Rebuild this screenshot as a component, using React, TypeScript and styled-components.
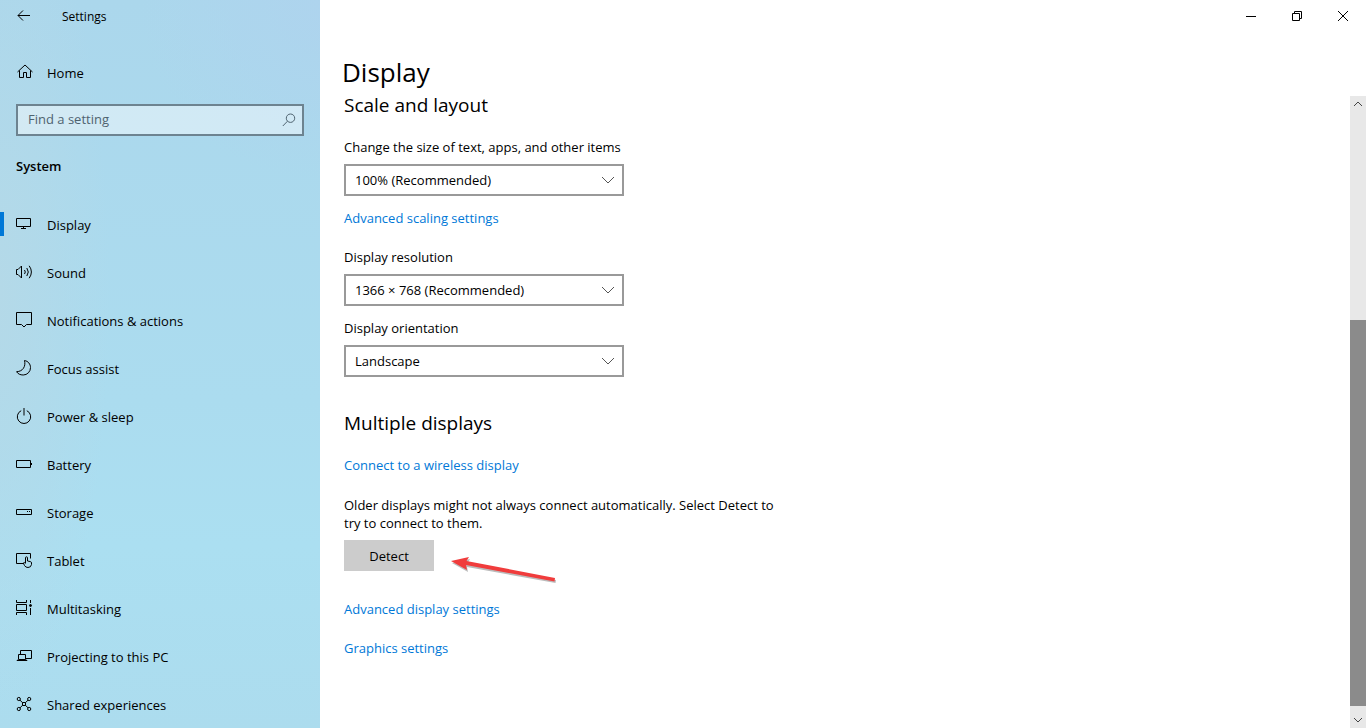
import React from "react";
import styled, { createGlobalStyle } from "styled-components";

const GlobalStyle = createGlobalStyle`
  *, *::before, *::after { box-sizing: border-box; }
  body {
    margin: 0;
    background: #fff;
    color: #000;
    font-family: "Open Sans", "Noto Sans", sans-serif;
    font-size: 13px;
    line-height: 20px;
  }
  button, input, select { font: inherit; color: inherit; }
  h1, h2, p, ul { margin: 0; padding: 0; }
`;

const Shell = styled.div`
  display: grid;
  grid-template-columns: 320px minmax(0, 1fr);
  min-height: 100vh;
`;

const Sidebar = styled.aside`
  display: flex;
  flex-direction: column;
  background:
    radial-gradient(circle at 100% 0, #aed4ee 0, rgba(174, 212, 238, 0) 180px),
    radial-gradient(ellipse 110px 420px at 0 40%, #b4d9e8 0, rgba(180, 217, 232, 0) 100%),
    linear-gradient(180deg, #abd7ec 0, #abdcef 55%, #abdff1 75%, #acdcee 100%);
`;

const TitleRow = styled.header`
  display: flex;
  align-items: center;
  height: 32px;
  font-size: 12px;
`;

const BackButton = styled.button`
  display: grid;
  place-items: center;
  width: 48px;
  height: 32px;
  padding: 0;
  border: 0;
  background: none;
`;

const AppName = styled.span`
  padding: 2px 0 0 14px;
`;

const SideLink = styled.a<{ $active?: boolean }>`
  display: flex;
  align-items: center;
  height: 48px;
  padding-left: ${(p) => (p.$active ? 12 : 16)}px;
  color: #000;
  text-decoration: none;

  &::before {
    content: "";
    display: ${(p) => (p.$active ? "block" : "none")};
    width: 4px;
    height: 24px;
    margin: 0 0 0 -12px;
    background: #0078d7;
  }

  & > svg { margin-left: ${(p) => (p.$active ? 12 : 0)}px; }
`;

const SideLabel = styled.span`
  padding: 2px 0 0 13px;
`;

const HomeArea = styled.div`
  padding-top: 16px;
`;

const SearchBox = styled.label`
  display: flex;
  align-items: center;
  height: 32px;
  margin: 8px 16px 0;
  padding: 0 6px 0 10px;
  border: 2px solid #6d8390;
  background: rgba(255, 255, 255, 0.45);
  color: #4f6370;
`;

const SearchInput = styled.input`
  flex: 1;
  min-width: 0;
  padding: 0 0 2px;
  border: 0;
  outline: 0;
  background: none;

  &::placeholder { color: #4f6370; opacity: 1; }
`;

const GroupTitle = styled.h2`
  padding: 20px 16px 24px;
  font-size: 13px;
  font-weight: 600;
  line-height: 20px;
`;

const NavList = styled.ul`
  list-style: none;
`;

const Main = styled.main`
  display: flex;
  flex-direction: column;
`;

const WindowButtons = styled.div`
  display: flex;
  justify-content: flex-end;
`;

const WindowButton = styled.button`
  display: grid;
  place-items: center;
  width: 46px;
  height: 32px;
  padding: 0;
  border: 0;
  background: none;
`;

const PageTitle = styled.h1`
  padding: 20px 22px 4px;
  font-size: 26px;
  font-weight: 400;
  line-height: 40px;
`;

const ScrollArea = styled.div`
  display: flex;
  flex: 1;
`;

const Content = styled.div`
  flex: 1;
  padding-left: 24px;
`;

const Section = styled.section`
  display: flex;
  flex-direction: column;
  align-items: flex-start;
  max-width: 448px;

  & + & { margin-top: 25px; }
`;

const SectionTitle = styled.h2`
  margin-bottom: 23px;
  font-size: 19px;
  font-weight: 400;
  line-height: 18px;
`;

const FieldBlock = styled.div`
  display: flex;
  flex-direction: column;
  gap: 7px;
  width: 280px;
  margin-bottom: 12px;
`;

const FieldLabel = styled.label`
  white-space: nowrap;
`;

const SelectFrame = styled.div`
  display: grid;
  align-items: center;

  & > * { grid-area: 1 / 1; }
  & > svg { justify-self: end; margin-right: 9px; pointer-events: none; }
`;

const SelectInput = styled.select`
  width: 100%;
  height: 32px;
  padding: 0 32px 0 9px;
  border: 2px solid #999;
  border-radius: 0;
  background: #fff;
  appearance: none;
`;

const TextLink = styled.a`
  margin-bottom: 19px;
  color: #0078d7;
  text-decoration: none;
`;

const Note = styled.p`
  margin: 2px 0 8px;
  line-height: 18px;
`;

const DetectRow = styled.div`
  position: relative;
  margin-bottom: 28px;
`;

const DetectButton = styled.button`
  display: block;
  width: 90px;
  height: 31px;
  padding: 0;
  border: 0;
  background: #ccc;
`;

const Pointer = styled.svg`
  position: absolute;
  left: 104px;
  top: 12px;
`;

const Scrollbar = styled.div`
  display: flex;
  flex-direction: column;
  width: 16px;
  background: #e8e8e8;
`;

const ScrollStep = styled.button`
  display: grid;
  place-items: center;
  height: 16px;
  padding: 0;
  border: 0;
  background: none;
`;

const ScrollGap = styled.div`
  flex: 208;
`;

const ScrollThumb = styled.div`
  flex: 386;
  margin-bottom: 6px;
  background: #8b8b8b;
`;

const Line = ({ children }: { children: React.ReactNode }) => (
  <svg width="18" height="18" viewBox="0 0 18 18" fill="none" stroke="#000" aria-hidden="true">
    {children}
  </svg>
);

const navItems: { name: string; icon: React.ReactNode }[] = [
  { name: "Display", icon: <path d="M.5 3.5h14v8H.5zM7.5 12v1M5 13.5h5" /> },
  {
    name: "Sound",
    icon: <path d="M.5 6.5H2L5.500 3v12L2 11.500H.5zM8.500 7q1.600 2 0 4M10.800 5q3 4 0 8M13.200 2.800q4.400 6.200 0 12.400" />,
  },
  { name: "Notifications & actions", icon: <path d="M.5 1.500h15v12h-5L8 16l-2.500-2.500h-5z" /> },
  {
    name: "Focus assist",
    icon: <path d="M8.500 1.500c3.600.6 6 3.600 6 7a7.300 7.300 0 0 1-7.300 7.500C4.200 16 1.900 14.900.6 12.700 6.800 12.500 10 7.500 8.500 1.500z" />,
  },
  { name: "Power & sleep", icon: <path d="M8 1v7.500M5.200 3.700a6.700 6.700 0 1 0 5.600 0" /> },
  { name: "Battery", icon: <path d="M.5 5.500h14v7H.5zM15.500 8v2" /> },
  { name: "Storage", icon: <path d="M.5 6.500h15v5H.5zM11 8.500h1M13 8.500h1" /> },
  {
    name: "Tablet",
    icon: <path d="M7 12.500H.5v-10h14v5M9.500 12V6.800q0-1 1-1t1 1V10l3 .6q1 .3 1 1.400v1.500q-.5 3-3.500 3-2.500 0-3.500-2L7.300 12q.7-1.300 2.200.5" />,
  },
  {
    name: "Multitasking",
    icon: (
      <>
        <path d="M.5 1v2.500h10V1M.5 5.500h10v6H.5zM.5 16v-2.500h10V16M14.500 1v3M14.500 9v7" />
        <circle cx="14.500" cy="6.500" r="1" fill="#000" />
      </>
    ),
  },
  { name: "Projecting to this PC", icon: <path d="M4.500 7V3.500h11v8H10M2.500 7.500h7v5h-7zM2 12.500l-1 1h10l-1-1" /> },
  {
    name: "Shared experiences",
    icon: (
      <>
        <circle cx="2.800" cy="4" r="1.600" />
        <circle cx="13.200" cy="4" r="1.600" />
        <circle cx="2.800" cy="14" r="1.600" />
        <circle cx="13.200" cy="14" r="1.600" />
        <path d="M4 5.200l2.600 2.500M12 5.200L9.400 7.700M4 12.800l2.600-2.500M12 12.800l-2.600-2.500M6.500 7.500h3v3h-3z" />
      </>
    ),
  },
];

const Field = ({ id, label, value }: { id: string; label: string; value: string }) => (
  <FieldBlock>
    <FieldLabel htmlFor={id}>{label}</FieldLabel>
    <SelectFrame>
      <SelectInput id={id} defaultValue={value}>
        <option>{value}</option>
      </SelectInput>
      <svg width="14" height="8" viewBox="0 0 14 8" fill="none" stroke="#555" aria-hidden="true">
        <path d="M1 1l6 6 6-6" />
      </svg>
    </SelectFrame>
  </FieldBlock>
);

export default function App() {
  return (
    <>
      <GlobalStyle />
      <Shell>
        <Sidebar>
          <TitleRow>
            <BackButton aria-label="Back">
              <svg width="14" height="12" viewBox="0 0 14 12" fill="none" stroke="#000">
                <path d="M1 5.500h12M6 .5l-5 5 5 5" />
              </svg>
            </BackButton>
            <AppName>Settings</AppName>
          </TitleRow>
          <HomeArea>
            <SideLink href="#home">
              <Line>
                <path d="M1.500 9L9 2l7.500 7M3.500 7.500v7h4v-5h3v5h4v-7" />
              </Line>
              <SideLabel>Home</SideLabel>
            </SideLink>
          </HomeArea>
          <SearchBox>
            <SearchInput type="text" placeholder="Find a setting" aria-label="Find a setting" />
            <svg width="14" height="14" viewBox="0 0 14 14" fill="none" stroke="#4f6370" aria-hidden="true">
              <circle cx="8.500" cy="5.200" r="4.200" />
              <path d="M5.500 8.200L.8 13" />
            </svg>
          </SearchBox>
          <GroupTitle>System</GroupTitle>
          <nav aria-label="System">
            <NavList>
              {navItems.map((item, i) => (
                <li key={item.name}>
                  <SideLink href="#" $active={i === 0} aria-current={i === 0 ? "page" : undefined}>
                    <Line>{item.icon}</Line>
                    <SideLabel>{item.name}</SideLabel>
                  </SideLink>
                </li>
              ))}
            </NavList>
          </nav>
        </Sidebar>
        <Main>
          <WindowButtons>
            <WindowButton aria-label="Minimize">
              <svg width="10" height="10" viewBox="0 0 10 10" stroke="#000">
                <path d="M0 5.500h10" />
              </svg>
            </WindowButton>
            <WindowButton aria-label="Restore">
              <svg width="10" height="10" viewBox="0 0 10 10" fill="none" stroke="#000">
                <path d="M.5 2.500h7v7h-7zM2.500 2V.5h7v7H8" />
              </svg>
            </WindowButton>
            <WindowButton aria-label="Close">
              <svg width="10" height="10" viewBox="0 0 10 10" stroke="#000">
                <path d="M0 0l10 10M10 0L0 10" />
              </svg>
            </WindowButton>
          </WindowButtons>
          <PageTitle>Display</PageTitle>
          <ScrollArea>
            <Content>
              <Section>
                <SectionTitle>Scale and layout</SectionTitle>
                <Field id="scale" label="Change the size of text, apps, and other items" value="100% (Recommended)" />
                <TextLink href="#scaling">Advanced scaling settings</TextLink>
                <Field id="resolution" label="Display resolution" value="1366 × 768 (Recommended)" />
                <Field id="orientation" label="Display orientation" value="Landscape" />
              </Section>
              <Section>
                <SectionTitle>Multiple displays</SectionTitle>
                <TextLink href="#wireless">Connect to a wireless display</TextLink>
                <Note>
                  Older displays might not always connect automatically. Select Detect to try to connect to them.
                </Note>
                <DetectRow>
                  <DetectButton>Detect</DetectButton>
                  <Pointer width="112" height="36" viewBox="0 0 112 36" aria-hidden="true">
                    <g fill="#777" opacity=".5" transform="translate(1 2)">
                      <path d="M3 9l18-4-2.500 4.500L107 26l-.5 3L18 13l1 5z" />
                    </g>
                    <path fill="#f03c3c" d="M3 9l18-4-2.500 4L107 26l-.5 3.500L18 13l1 5z" />
                  </Pointer>
                </DetectRow>
                <TextLink href="#advanced">Advanced display settings</TextLink>
                <TextLink href="#graphics">Graphics settings</TextLink>
              </Section>
            </Content>
            <Scrollbar>
              <ScrollStep aria-label="Scroll up">
                <svg width="10" height="6" viewBox="0 0 10 6" fill="none" stroke="#444">
                  <path d="M1 5l4-4 4 4" />
                </svg>
              </ScrollStep>
              <ScrollGap />
              <ScrollThumb />
              <ScrollStep aria-label="Scroll down">
                <svg width="10" height="6" viewBox="0 0 10 6" fill="none" stroke="#444">
                  <path d="M1 1l4 4 4-4" />
                </svg>
              </ScrollStep>
            </Scrollbar>
          </ScrollArea>
        </Main>
      </Shell>
    </>
  );
}
